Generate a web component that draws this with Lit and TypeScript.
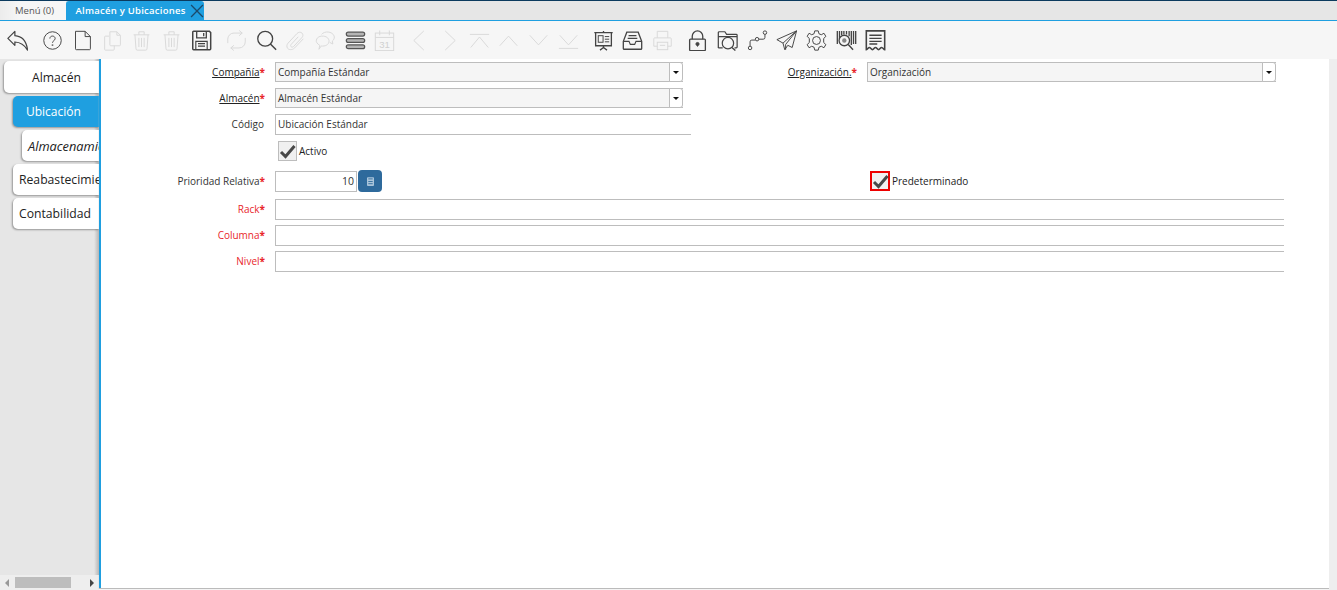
import { LitElement, html, css, svg } from "lit";
import { customElement } from "lit/decorators.js";

// toolbar icons, all drawn on a 24x24 box
const icons: Record<string, unknown> = {
  undo: svg`<path d="M1 9.500 9 1.500v5C16 7 22 11 23.500 23c-3.500-6-8-9-14.500-9.300V17.500z" stroke-width="1.400" stroke-linejoin="round"/>`,
  help: svg`<circle cx="12" cy="12" r="10"/><path d="M9 9.800c0-3.800 6-3.800 6 0 0 2.400-3 2.400-3 4.800"/><path d="M12 16.500v1.500" stroke-width="1.800"/>`,
  file: svg`<path d="M4 1.500h11l6 6v14a1 1 0 0 1-1 1H5a1 1 0 0 1-1-1z"/><path d="M15 1.500v6h6"/>`,
  copy: svg`<path d="M8 7H4a1 1 0 0 0-1 1v14a1 1 0 0 0 1 1h9a1 1 0 0 0 1-1v-4"/><path d="M9 2h8l4 4v11a1 1 0 0 1-1 1h-10a1 1 0 0 1-1-1z"/><path d="M17 2v4h4"/>`,
  trash: svg`<path d="M3 5.500h18M9 5.500V2h6v3.500M4.500 5.500l1.200 16a1.500 1.500 0 0 0 1.500 1.500h9.600a1.500 1.500 0 0 0 1.500-1.500l1.200-16M9 9v10.500M12 9v10.500M15 9v10.500"/>`,
  save: svg`<path d="M2 2.500a1 1 0 0 1 1-1h18l1.500 1.500v18.500a1 1 0 0 1-1 1H3a1 1 0 0 1-1-1z" stroke-width="1.700"/><path d="M6.500 1.500V9h11V1.500M14.500 3.500v3.500" stroke-width="1.500"/><path d="M5.500 22.500V13h13v9.500M8 15.500h8M8 18.500h8" stroke-width="1.300"/>`,
  refresh: svg`<path d="M2 15V10.500a7 7 0 0 1 7-7h9.500l-3.500-3M22 9v4.500a7 7 0 0 1-7 7H5.500l3.500 3"/><path d="M18.500 3.500l-3.500 3M5.500 20.500l3.500-3"/>`,
  search: svg`<circle cx="10.500" cy="10" r="8.500" stroke-width="1.500"/><path d="m16.500 16 6.500 6.500" stroke-width="1.700"/>`,
  clip: svg`<path d="M21 10 11 20.500c-2.600 2.700-6.600 2.300-8 .5-1.400-1.900-1-4.200.5-6l10-10.800c1.900-2.100 4.500-2.100 5.900-.7 1.600 1.500 1.300 3.800-.2 5.300l-9.300 10c-1 1-2.300 1-3 .3-.7-.7-.6-1.900.4-2.900l7.800-8.400"/>`,
  chat: svg`<path d="M4.500 22l1-4.500C2.500 16 1 13.500 1.500 11.500 2.300 8 6 6.500 10 7c3.800.5 6.500 3.300 6 6.500-.5 3.300-4.500 5.500-8.800 4.700z"/><path d="M7.500 5C9 3 12.500 1.800 15.800 2.400c3.900.7 6.700 3.500 6.200 6.800-.3 1.500-1.100 2.700-2.200 3.400l.6 3.400-3.400-1.700"/>`,
  menu: svg`<g stroke-width="1.400" stroke="#555"><rect x="1.500" y="2.500" width="21" height="4.400" rx="2.200" fill="#b5b5b5"/><rect x="1.500" y="9.800" width="21" height="4.400" rx="2.200" fill="#b5b5b5"/><rect x="1.500" y="17" width="21" height="4.400" rx="2.200" fill="#b5b5b5"/></g>`,
  calendar: svg`<rect x="1.500" y="3.500" width="21" height="20"/><path d="M1.500 8.500h21M6.500 .5V6M17.500 .5V6"/><text x="12" y="20.500" text-anchor="middle" font-size="11" font-family="Liberation Sans, sans-serif" fill="#d0d0d0" stroke="none">31</text>`,
  prev: svg`<path d="M17 1 5.500 12 17 23"/>`,
  next: svg`<path d="M7 1l11.500 11L7 23"/>`,
  first: svg`<path d="M1 5h22M2 20 12 8l10 12"/>`,
  up: svg`<path d="M2 18 12 7l10 11"/>`,
  down: svg`<path d="M2 6l10 11L22 6"/>`,
  last: svg`<path d="M1 21h22M2 6l10 11L22 6"/>`,
  slides: svg`<path d="M1.500 3h21M3 3v15h18V3M12 18v2M8 23l4-3 4 3M12 1v2" stroke-width="1.500"/><rect x="6" y="6.500" width="5.500" height="7.500"/><path d="M13.500 7.500h5M13.500 10.500h5M13.500 13.500h5"/>`,
  inbox: svg`<path d="M1.500 13 5.500 2.500h13l4 10.500v8a1 1 0 0 1-1 1h-19a1 1 0 0 1-1-1z" stroke-width="1.500"/><path d="M1.500 13H8l1.500 3.500h5L16 13h6.500M7.500 6.500h9M6.500 9.500h11" stroke-width="1.300"/>`,
  print: svg`<path d="M6 9V1.500h12V9M6 18.500H2V10a1 1 0 0 1 1-1h18a1 1 0 0 1 1 1v8.500h-4"/><rect x="6" y="14" width="12" height="8.500"/><path d="M9 17.500h6"/>`,
  lock: svg`<path d="M6 10.500V7a6 6 0 0 1 12 0v3.500" stroke-width="1.500"/><rect x="3" y="10.500" width="18" height="13" rx="1" stroke-width="1.500"/><circle cx="12" cy="16" r="1.800" fill="#444"/><path d="M12 16v3"/>`,
  folderSearch: svg`<path d="M1.500 20.500V3a1 1 0 0 1 1-1h6.500l2 3h11a1 1 0 0 1 1 1v13.500a1 1 0 0 1-1 1h-2M1.500 20.500h5M1.500 7.500h21" stroke-width="1.400"/><circle cx="12.500" cy="15" r="6.500" stroke-width="1.400"/><path d="m17 20 4 3.500" stroke-width="1.500"/>`,
  route: svg`<circle cx="3.500" cy="20.500" r="2"/><circle cx="11.500" cy="10.500" r="2"/><circle cx="20.500" cy="3" r="2"/><path d="M3.500 18.500v-5a2 2 0 0 1 2-2h4M13.500 10.500h5a2 2 0 0 0 2-2V5"/>`,
  send: svg`<path d="M23.500 1 1 11l7 4 2 7.500 3.500-5 5 2.500zM23.500 1 8 15M23.500 1 11 16.500v6"/>`,
  gear: svg`<circle cx="12" cy="12" r="4.500"/><path d="M10 1h4l.8 3.300 2.700 1.100 3-1.700 2.200 3.600-2.500 2.400v4.600l2.500 2.400-2.200 3.600-3-1.700-2.700 1.100L14 23h-4l-.8-3.300-2.700-1.100-3 1.700-2.200-3.600 2.500-2.400V9.700L1.300 7.300l2.200-3.600 3 1.700 2.700-1.100z"/>`,
  barcode: svg`<path d="M1.500 1v15M4 1v9M6.500 1v5M9 1v4M12 1v4M15 1v6M17.500 1v16M20 1v15M22.500 1v15" stroke-width="1.500"/><circle cx="9.500" cy="12" r="6" stroke-width="1.500" fill="#f6f6f6"/><circle cx="9.500" cy="12" r="2.500" fill="#888" stroke="none"/><path d="m14 16.500 5.500 6" stroke-width="1.600"/>`,
  receipt: svg`<path d="M1.500 1h21v21.500c-1 0-2-2.500-3.500-2.500s-2 2.500-3.500 2.500-2-2.500-3.500-2.500-2 2.500-3.500 2.500-2-2.500-3.500-2.500-2 2.500-3.500 2.500z" stroke-width="1.800"/><path d="M5 6h14M5 9.500h14M5 13h14M5 16h9" stroke-width="1.500"/>`,
};

const groups: [string, boolean][][] = [
  [["undo", true]],
  [["help", true], ["file", true], ["copy", false], ["trash", false], ["trash", false], ["save", true]],
  [["refresh", false], ["search", true], ["clip", false], ["chat", false], ["menu", true], ["calendar", false]],
  [["prev", false], ["next", false], ["first", false], ["up", false], ["down", false], ["last", false]],
  [["slides", true], ["inbox", true], ["print", false]],
  [["lock", true], ["folderSearch", true], ["route", true], ["send", true], ["gear", true], ["barcode", true], ["receipt", true]],
];

const sideTabs = [
  { name: "Almacén", cls: "level0 centered" },
  { name: "Ubicación", cls: "level1 selected" },
  { name: "Almacenamiento", cls: "level2 italic" },
  { name: "Reabastecimiento", cls: "level1" },
  { name: "Contabilidad", cls: "level1" },
];

@customElement("app-root")
export class AppRoot extends LitElement {
  static styles = css`
    :host {
      display: block;
      height: 590px;
      overflow: hidden;
      font-family: "Open Sans", "Noto Sans", sans-serif;
      font-size: 10px;
      color: #333;
      background: #fff;
    }

    .top-tabs {
      display: flex;
      box-sizing: border-box;
      background: #e6e6e6;
      border-top: 1px solid #0b3a5e;
      border-bottom: 1px solid #1f9fe0;
      height: 21px;
    }

    .top-tab {
      display: flex;
      align-items: center;
      height: 19px;
      box-sizing: border-box;
      font-size: 9.500px;
    }

    .top-tab.menu {
      width: 66px;
      padding-left: 15px;
      background: linear-gradient(90deg, #ececec 0, #f6f6f6 30%);
      color: #555;
    }

    .top-tab.active {
      width: 138px;
      padding-left: 9.500px;
      background: #1f9fe0;
      color: #fff;
      font-weight: 600;
      letter-spacing: 0.250px;
      border-radius: 3px 3px 0 0;
      gap: 4px;
    }

    .top-tab.active svg {
      width: 14px;
      height: 14px;
      stroke: #1b4a6b;
      stroke-width: 1.200;
      fill: none;
      flex: none;
    }

    .toolbar {
      display: flex;
      gap: 5.500px;
      height: 38px;
      padding-left: 3px;
      background: #f6f6f6;
      align-items: center;
    }

    .group {
      display: flex;
    }

    .tool {
      display: flex;
      align-items: center;
      justify-content: center;
      width: 29.670px;
      height: 38px;
    }

    .tool svg {
      width: 21px;
      height: 21px;
      fill: none;
      stroke: #444;
      stroke-width: 1.100;
    }

    .tool.off svg {
      stroke: #d8d8d8;
    }

    .main {
      display: flex;
      height: 531px;
    }

    .side {
      display: flex;
      flex-direction: column;
      width: 99px;
      flex: none;
      background: linear-gradient(90deg, #e6e6e6 95%, #b5b5b5 100%);
    }

    .side-tabs {
      flex: 1;
      display: flex;
      flex-direction: column;
      gap: 3px;
      padding-top: 2px;
      overflow: hidden;
    }

    .side-tab {
      display: flex;
      align-items: center;
      height: 31px;
      flex: none;
      box-sizing: border-box;
      background: #fff;
      border-radius: 5px 0 0 5px;
      box-shadow: -1px 1px 2px rgba(0, 0, 0, 0.350);
      font-size: 12.200px;
      color: #222;
      white-space: nowrap;
      overflow: hidden;
    }

    .level0 {
      margin-left: 4px;
      height: 32px;
    }

    .level1 {
      margin-left: 13px;
      padding-left: 6px;
    }

    .level2 {
      margin-left: 22px;
      padding-left: 6px;
    }

    .centered {
      padding-left: 28px;
    }

    .italic {
      font-style: italic;
      font-size: 12.800px;
    }

    .selected {
      background: #1f9fe0;
      color: #fff;
      font-weight: 500;
      font-size: 12px;
      padding-left: 13px;
    }

    .side-scroll {
      display: flex;
      align-items: center;
      height: 15px;
      flex: none;
      background: #eeeeee;
    }

    .thumb {
      width: 56px;
      height: 11px;
      margin-left: 6px;
      background: #bdbdbd;
    }

    .arrow {
      width: 0;
      height: 0;
      border-top: 4px solid transparent;
      border-bottom: 4px solid transparent;
    }

    .arrow.left {
      margin-left: 5px;
      border-right: 4px solid #999;
    }

    .arrow.right {
      margin-left: 19px;
      border-left: 4px solid #444;
    }

    .content {
      flex: 1;
      border-left: 2px solid #1f9fe0;
      background: #fff;
      margin-bottom: 2px;
      box-shadow: 0 1px 1px #bbb;
    }

    .form {
      display: grid;
      grid-template-columns: 164px 416px 156px 417px;
      column-gap: 10px;
      align-items: center;
      width: 1183px;
      padding-top: 3px;
    }

    .row-gap {
      grid-column: 1 / -1;
    }

    .label {
      text-align: right;
      white-space: nowrap;
      margin-top: -1px;
    }

    .label.plain {
      padding-right: 1px;
    }

    .label u {
      color: #222;
    }

    .label.red {
      color: #e8262a;
    }

    .req {
      color: #e8262a;
      font-weight: 700;
    }

    .combo {
      display: flex;
      width: 408px;
      height: 20px;
      box-sizing: border-box;
      border: 1px solid #bdbdbd;
      border-right: 0;
      background: #f5f5f5;
    }

    .combo.right {
      width: 409px;
    }

    .combo span {
      flex: 1;
      padding-left: 2px;
      line-height: 19px;
    }

    .combo i {
      position: relative;
      width: 14px;
      margin-top: -1px;
      margin-bottom: -1px;
      background: #fff;
      border: 1px solid #bdbdbd;
      border-radius: 0 3px 3px 0;
      box-sizing: border-box;
    }

    .combo i::after {
      content: "";
      position: absolute;
      left: 3px;
      top: 8px;
      border-left: 3px solid transparent;
      border-right: 3px solid transparent;
      border-top: 3px solid #111;
    }

    .text {
      height: 21px;
      box-sizing: border-box;
      border-top: 1px solid #bdbdbd;
      border-bottom: 1px solid #bdbdbd;
      border-left: 1px solid #bdbdbd;
      padding-left: 2px;
      line-height: 19px;
      background: #fff;
    }

    .wide {
      grid-column: 2 / -1;
      width: 1009px;
    }

    .check {
      display: flex;
      align-items: center;
      gap: 2px;
      color: #222;
    }

    .box {
      display: flex;
      width: 19px;
      height: 20px;
      box-sizing: border-box;
      border: 1px solid #bdbdbd;
      background: #f0f0f0;
      align-items: center;
      justify-content: center;
    }

    .box.marked {
      width: 20px;
      border: 2px solid #ee0000;
    }

    .box svg {
      width: 17px;
      height: 15px;
      fill: none;
      stroke: #484848;
      stroke-width: 3;
      flex: none;
    }

    .number {
      display: flex;
      align-items: center;
      gap: 1px;
    }

    .number .value {
      width: 82px;
      height: 21px;
      box-sizing: border-box;
      border: 1px solid #bdbdbd;
      text-align: right;
      padding-right: 2px;
      line-height: 19px;
      font-size: 10.500px;
    }

    .calc {
      display: flex;
      align-items: center;
      justify-content: center;
      width: 24px;
      height: 22px;
      background: #2e6a9c;
      border-radius: 4px;
    }

    .calc svg {
      width: 7px;
      height: 9px;
    }

    .gutter {
      width: 8px;
      flex: none;
      background: #eeeeee;
    }

    .gap-6 {
      height: 6px;
    }

    .gap-5 {
      height: 5px;
    }

    .gap-7 {
      height: 7px;
    }

    .gap-9 {
      height: 9px;
    }

    .inset {
      padding-left: 3px;
    }
  `;

  renderLabel(text: string, opts: { link?: boolean; red?: boolean; req?: boolean } = {}) {
    return html`<div class="label ${opts.red ? "red" : ""} ${opts.req ? "" : "plain"}">
      ${opts.link ? html`<u>${text}</u>` : text}${opts.req ? html`<span class="req">*</span>` : ""}
    </div>`;
  }

  renderCheck(label: string, marked = false) {
    return html`<div class="check">
      <div class="box ${marked ? "marked" : ""}">
        <svg viewBox="0 0 17 15"><path d="M2 8l4.500 4.500L15.500 2" /></svg>
      </div>
      ${label}
    </div>`;
  }

  render() {
    return html`
      <div class="top-tabs">
        <div class="top-tab menu">Menú (0)</div>
        <div class="top-tab active">
          Almacén y Ubicaciones
          <svg viewBox="0 0 13 13"><path d="M1 1l11 11M12 1 1 12" /></svg>
        </div>
      </div>
      <div class="toolbar">
        ${groups.map(
          (g) => html`<div class="group">
            ${g.map(
              ([name, on]) => html`<div class="tool ${on ? "" : "off"}">
                <svg viewBox="0 0 24 24">${icons[name]}</svg>
              </div>`
            )}
          </div>`
        )}
      </div>
      <div class="main">
        <div class="side">
          <div class="side-tabs">
            ${sideTabs.map((t) => html`<div class="side-tab ${t.cls}">${t.name}</div>`)}
          </div>
          <div class="side-scroll">
            <div class="arrow left"></div>
            <div class="thumb"></div>
            <div class="arrow right"></div>
          </div>
        </div>
        <div class="content">
          <div class="form">
            ${this.renderLabel("Compañía", { link: true, req: true })}
            <div class="combo"><span>Compañía Estándar</span><i></i></div>
            ${this.renderLabel("Organización.", { link: true, req: true })}
            <div class="combo right"><span>Organización</span><i></i></div>
            <div class="row-gap gap-6"></div>

            ${this.renderLabel("Almacén", { link: true, req: true })}
            <div class="combo"><span>Almacén Estándar</span><i></i></div>
            <div class="row-gap gap-6"></div>

            ${this.renderLabel("Código")}
            <div class="text">Ubicación Estándar</div>
            <div class="row-gap gap-6"></div>

            <div></div>
            <div class="inset">${this.renderCheck("Activo")}</div>
            <div class="row-gap gap-9"></div>

            ${this.renderLabel("Prioridad Relativa", { req: true })}
            <div class="number">
              <div class="value">10</div>
              <div class="calc">
                <svg viewBox="0 0 8 10">
                  <rect width="8" height="10" rx="1" fill="#a9c4da" />
                  <path d="M1.500 2h5M1.500 5h5M1.500 7.500h5" stroke="#2e6a9c" />
                </svg>
              </div>
            </div>
            <div></div>
            <div class="inset">${this.renderCheck("Predeterminado", true)}</div>
            <div class="row-gap gap-7"></div>

            ${this.renderLabel("Rack", { red: true, req: true })}
            <div class="text wide"></div>
            <div class="row-gap gap-5"></div>
            ${this.renderLabel("Columna", { red: true, req: true })}
            <div class="text wide"></div>
            <div class="row-gap gap-5"></div>
            ${this.renderLabel("Nivel", { red: true, req: true })}
            <div class="text wide"></div>
          </div>
        </div>
        <div class="gutter"></div>
      </div>
    `;
  }
}
